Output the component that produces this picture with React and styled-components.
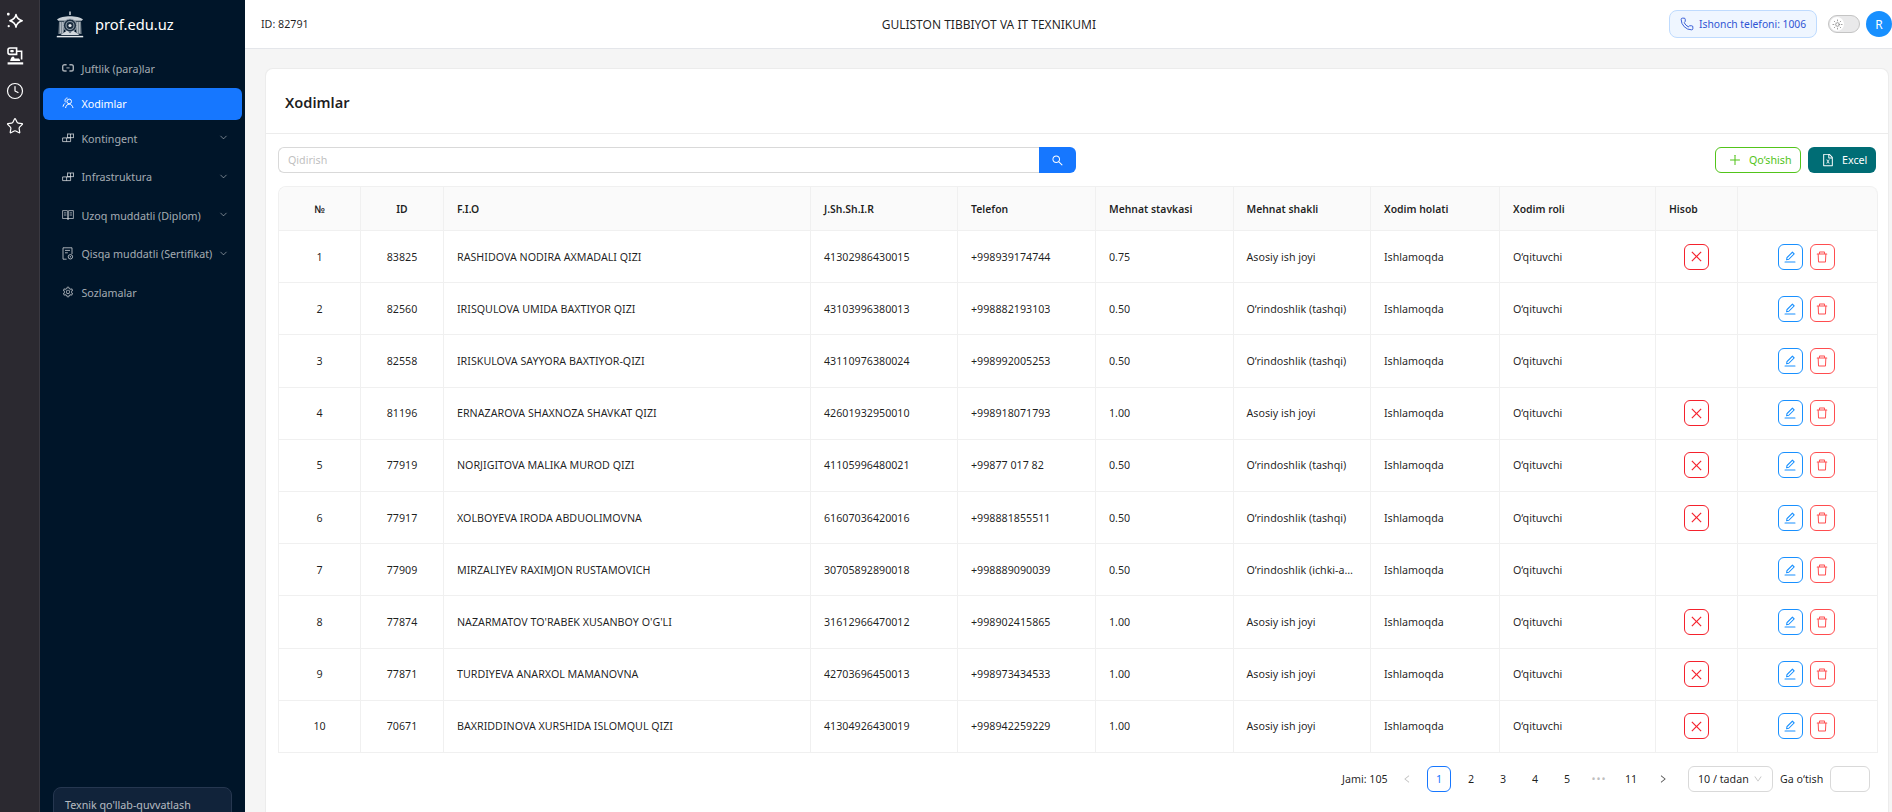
import React from 'react';
import styled, { createGlobalStyle } from 'styled-components';
import { Clock, Star, Phone, Sun, ChevronDown } from 'lucide-react';
import {
	AiOutlineClose,
	AiOutlineDelete,
	AiOutlineEdit,
	AiOutlineFileExcel,
	AiOutlineLeft,
	AiOutlinePlus,
	AiOutlineRight,
	AiOutlineSearch,
	AiOutlineSetting,
	AiOutlineDown
} from 'react-icons/ai';

const Global = createGlobalStyle`
	html, body {
		margin: 0;
		height: 100%;
		overflow: hidden;
		background: #f5f5f5;
	}
	body {
		font-family: 'Noto Sans', 'Open Sans', sans-serif;
		font-size: 10.7px;
		color: rgba(0, 0, 0, 0.88);
	}
	* {
		box-sizing: border-box;
	}
`;

const SparkIcon = () => (
	<svg width='18' height='18' viewBox='0 0 18 18' fill='none' stroke='currentColor' strokeWidth='1.5'>
		<path d='M10 2.5 C10.6 6 12.2 7.6 16.2 8.7 C12.2 9.8 10.6 11.4 10 15.2 C9.4 11.4 7.8 9.8 3.8 8.7 C7.8 7.6 9.4 6 10 2.5 Z' strokeLinejoin='round' />
		<rect x='1' y='0.8' width='2.6' height='2.6' rx='1' fill='currentColor' stroke='none' />
		<rect x='1.6' y='13' width='2.2' height='2.2' rx='1' fill='currentColor' stroke='none' />
	</svg>
);

const DeskIcon = () => (
	<svg width='17' height='18' viewBox='0 0 17 18' fill='none' stroke='currentColor' strokeWidth='1.6'>
		<path d='M3 1 H9.6 V7.4 H3 C1.8 7.4 1 6.6 1 5.6 V2.8 C1 1.8 1.8 1 3 1 Z' />
		<rect x='3.2' y='3' width='3.6' height='2.2' rx='1' fill='currentColor' stroke='none' />
		<path d='M9.6 4.2 H14.6 V12.4' />
		<path d='M5 9.8 C4 11.2 3.4 12.4 3.2 14 H13.2 C13 12.8 12.6 12 12 11.4 H7.6 L7 9.8 Z' fill='currentColor' stroke='none' />
		<path d='M0.6 16.4 H16.2' strokeWidth='2.2' />
	</svg>
);

const LinkIcon = () => (
	<svg width='12' height='12' viewBox='0 0 12 12' fill='none' stroke='currentColor' strokeWidth='1.4'>
		<path d='M4.6 2.8 H2.6 C1.4 2.8 0.7 3.6 0.7 4.6 V7.2 C0.7 8.2 1.4 9 2.6 9 H4.6' />
		<path d='M7.4 2.8 H9.4 C10.6 2.8 11.3 3.6 11.3 4.6 V7.2 C11.3 8.2 10.6 9 9.4 9 H7.4' />
		<path d='M4.4 5.9 H7.6' strokeWidth='1' />
	</svg>
);

const UsersIcon = () => (
	<svg width='12' height='12' viewBox='0 0 12 12' fill='none' stroke='currentColor' strokeWidth='1'>
		<circle cx='7.2' cy='4.4' r='2.3' />
		<path d='M3.6 11 C3.9 8.6 5.3 7.2 7.2 7.2 C9.1 7.2 10.5 8.6 11 11' />
		<path d='M5.5 1 C3.9 1 3 2.2 3 3.6 C3 4.3 3.3 4.8 3.6 5.3' />
		<path d='M2.9 6.4 C1.9 7.1 1.2 8.3 1 9.7' />
	</svg>
);

const BlocksIcon = () => (
	<svg width='12' height='12' viewBox='0 0 12 12' fill='none' stroke='currentColor' strokeWidth='1'>
		<rect x='5.5' y='2' width='6' height='3.6' />
		<path d='M0.6 5.9 H8.6 V9.6 H0.6 Z' />
		<path d='M4.6 5.9 V9.6' />
		<path d='M8.5 2 V5.6' />
	</svg>
);

const BookIcon = () => (
	<svg width='12' height='12' viewBox='0 0 12 12' fill='none' stroke='currentColor' strokeWidth='0.9'>
		<path d='M0.6 1.6 H5.1 C5.6 1.6 6 2 6 2.6 V10.4 C6 9.9 5.6 9.5 5.1 9.5 H0.6 Z' />
		<path d='M11.4 1.6 H6.9 C6.4 1.6 6 2 6 2.6 V10.4 C6 9.9 6.4 9.5 6.9 9.5 H11.4 Z' />
		<path d='M2 3.9 H4.4 M2 6 H4.4 M7.6 3.9 H10 M7.6 6 H10' />
	</svg>
);

const FileBadgeIcon = () => (
	<svg width='12' height='13' viewBox='0 0 12 13' fill='none' stroke='currentColor' strokeWidth='1'>
		<path d='M4.6 12.2 H1 V0.8 H10 V7' />
		<path d='M3 3.4 H8 M3 5.8 H5.8' />
		<circle cx='8.4' cy='9.8' r='2.2' />
		<circle cx='8.4' cy='9.8' r='0.7' fill='currentColor' stroke='none' />
	</svg>
);

const LogoIcon = () => (
	<svg width='28' height='27' viewBox='0 0 28 27' fill='none'>
		<path d='M14 0.5 V4' stroke='#dfe4e8' strokeWidth='1.4' />
		<path d='M1 8.4 C6 4.2 22 4.2 27 8.4 L25.6 9.8 H2.4 Z' fill='#c9d0d6' />
		<path d='M3 10.6 L9.4 10.6 L7.4 23 H2.4 Z M25 10.6 L18.6 10.6 L20.6 23 H25.6 Z' fill='#77848f' />
		<path d='M4.6 11 V22 M6.6 11 V22 M23.4 11 V22 M21.4 11 V22' stroke='#cfd6dc' strokeWidth='0.7' />
		<circle cx='14' cy='14.5' r='6.6' fill='#1a2c3f' stroke='#a5b0ba' strokeWidth='1' />
		<circle cx='14' cy='14.5' r='4' stroke='#8997a3' strokeWidth='1.1' />
		<circle cx='14' cy='14.5' r='1.6' fill='#e6eaed' />
		<path d='M4.5 24 L11 19.6 L14 22.2 L17 19.6 L23.5 24 Z' fill='#d3d9de' />
		<path d='M0.8 25.6 H27.2' stroke='#e6eaed' strokeWidth='1.5' />
	</svg>
);

const menuItems = [
	{ label: 'Juftlik (para)lar', icon: <LinkIcon /> },
	{ label: 'Xodimlar', icon: <UsersIcon />, active: true },
	{ label: 'Kontingent', icon: <BlocksIcon />, sub: true },
	{ label: 'Infrastruktura', icon: <BlocksIcon />, sub: true },
	{ label: 'Uzoq muddatli (Diplom)', icon: <BookIcon />, sub: true },
	{ label: 'Qisqa muddatli (Sertifikat)', icon: <FileBadgeIcon />, sub: true },
	{ label: 'Sozlamalar', icon: <AiOutlineSetting size={12} /> }
];

const columns = [
	{ title: '№', width: 82, center: true },
	{ title: 'ID', width: 83, center: true },
	{ title: 'F.I.O', width: 367 },
	{ title: 'J.Sh.Sh.I.R', width: 147 },
	{ title: 'Telefon', width: 138 },
	{ title: 'Mehnat stavkasi', width: 137.5 },
	{ title: 'Mehnat shakli', width: 137.5 },
	{ title: 'Xodim holati', width: 129 },
	{ title: 'Xodim roli', width: 156 },
	{ title: 'Hisob', width: 82 },
	{ title: '', width: 140 }
];

const MAIN = 'Asosiy ish joyi';
const TASHQI = 'O‘rindoshlik (tashqi)';

const employees = [
	[1, 83825, 'RASHIDOVA NODIRA AXMADALI QIZI', '41302986430015', '+998939174744', '0.75', MAIN, true],
	[2, 82560, 'IRISQULOVA UMIDA BAXTIYOR QIZI', '43103996380013', '+998882193103', '0.50', TASHQI, false],
	[3, 82558, 'IRISKULOVA SAYYORA BAXTIYOR-QIZI', '43110976380024', '+998992005253', '0.50', TASHQI, false],
	[4, 81196, 'ERNAZAROVA SHAXNOZA SHAVKAT QIZI', '42601932950010', '+998918071793', '1.00', MAIN, true],
	[5, 77919, 'NORJIGITOVA MALIKA MUROD QIZI', '41105996480021', '+99877 017 82', '0.50', TASHQI, true],
	[6, 77917, 'XOLBOYEVA IRODA ABDUOLIMOVNA', '61607036420016', '+998881855511', '0.50', TASHQI, true],
	[7, 77909, 'MIRZALIYEV RAXIMJON RUSTAMOVICH', '30705892890018', '+998889090039', '0.50', 'O‘rindoshlik (ichki-asosiy)', false],
	[8, 77874, "NAZARMATOV TO'RABEK XUSANBOY O'G'LI", '31612966470012', '+998902415865', '1.00', MAIN, true],
	[9, 77871, 'TURDIYEVA ANARXOL MAMANOVNA', '42703696450013', '+998973434533', '1.00', MAIN, true],
	[10, 70671, 'BAXRIDDINOVA XURSHIDA ISLOMQUL QIZI', '41304926430019', '+998942259229', '1.00', MAIN, true]
];

const pages = ['1', '2', '3', '4', '5', '•••', '11'];

export default function App() {
	return (
		<Page>
			<Global />
			<Rail>
				<RailIcon><SparkIcon /></RailIcon>
				<RailIcon><DeskIcon /></RailIcon>
				<RailIcon><Clock size={18} strokeWidth={1.6} /></RailIcon>
				<RailIcon><Star size={18} strokeWidth={1.6} /></RailIcon>
			</Rail>
			<Sidebar>
				<Brand>
					<LogoIcon />
					<BrandName>prof.edu.uz</BrandName>
				</Brand>
				<Menu>
					{menuItems.map((item) => (
						<MenuItem key={item.label} $active={item.active} $sub={item.sub}>
							<MenuIcon>{item.icon}</MenuIcon>
							<MenuLabel>{item.label}</MenuLabel>
							{item.sub && <MenuChevron size={11} strokeWidth={1.5} />}
						</MenuItem>
					))}
				</Menu>
				<Support>Texnik qo'llab-quvvatlash</Support>
			</Sidebar>
			<Main>
				<Header>
					<span>ID: 82791</span>
					<HeaderTitle>GULISTON TIBBIYOT VA IT TEXNIKUMI</HeaderTitle>
					<HeaderRight>
						<PhonePill>
							<Phone size={14} strokeWidth={1.6} />
							Ishonch telefoni: 1006
						</PhonePill>
						<Toggle>
							<ToggleKnob><Sun size={11} strokeWidth={1.5} /></ToggleKnob>
						</Toggle>
						<Avatar>R</Avatar>
					</HeaderRight>
				</Header>
				<Content>
					<Card>
						<CardHeader>Xodimlar</CardHeader>
						<CardBody>
							<Toolbar>
								<SearchGroup>
									<SearchInput placeholder='Qidirish' />
									<SearchButton><AiOutlineSearch size={13} /></SearchButton>
								</SearchGroup>
								<ToolbarActions>
									<AddButton><AiOutlinePlus size={14} />Qo‘shish</AddButton>
									<ExcelButton><AiOutlineFileExcel size={14} />Excel</ExcelButton>
								</ToolbarActions>
							</Toolbar>
							<Table>
								<colgroup>
									{columns.map((col, i) => (
										<col key={i} style={{ width: col.width }} />
									))}
								</colgroup>
								<thead>
									<tr>
										{columns.map((col, i) => (
											<Th key={i} $center={col.center}>{col.title}</Th>
										))}
									</tr>
								</thead>
								<tbody>
									{employees.map((row) => (
										<tr key={row[0]}>
											<Td $center>{row[0]}</Td>
											<Td $center>{row[1]}</Td>
											<Td>{row[2]}</Td>
											<Td>{row[3]}</Td>
											<Td>{row[4]}</Td>
											<Td>{row[5]}</Td>
											<Td>{row[6]}</Td>
											<Td>Ishlamoqda</Td>
											<Td>O‘qituvchi</Td>
											<Td $center>
												{row[7] && (
													<IconButton $color='#f5222d'><AiOutlineClose size={15} /></IconButton>
												)}
											</Td>
											<Td $center>
												<ActionGroup>
													<IconButton $color='#1890ff'><AiOutlineEdit size={14} /></IconButton>
													<IconButton $color='#ff4d4f'><AiOutlineDelete size={14} /></IconButton>
												</ActionGroup>
											</Td>
										</tr>
									))}
								</tbody>
							</Table>
							<Pagination>
								<Total>Jami: 105</Total>
								<PageArrow $disabled><AiOutlineLeft size={10} /></PageArrow>
								{pages.map((p) => (
									<PageButton key={p} $active={p === '1'} $dots={p === '•••'}>{p}</PageButton>
								))}
								<PageArrow><AiOutlineRight size={10} /></PageArrow>
								<SizeSelect>10 / tadan<AiOutlineDown size={10} color='#bfbfbf' /></SizeSelect>
								<JumpLabel>Ga o‘tish</JumpLabel>
								<JumpInput />
							</Pagination>
						</CardBody>
					</Card>
				</Content>
			</Main>
		</Page>
	);
}

const Page = styled.div`
	display: flex;
	height: 812px;
	overflow: hidden;
`;

const Rail = styled.aside`
	flex: 0 0 40px;
	display: flex;
	flex-direction: column;
	padding-top: 3px;
	background: #2b2930;
	border-right: 1px solid #3a3840;
	color: #fff;
`;

const RailIcon = styled.div`
	width: 30px;
	height: 35px;
	display: flex;
	align-items: center;
	justify-content: center;
`;

const Sidebar = styled.aside`
	flex: 0 0 205px;
	min-width: 0;
	display: flex;
	flex-direction: column;
	background: #001529;
`;

const Brand = styled.div`
	display: flex;
	align-items: center;
	gap: 11px;
	height: 53px;
	padding: 0 0 5px 16px;
`;

const BrandName = styled.span`
	font-size: 14.7px;
	color: #fff;
`;

const Menu = styled.nav`
	flex: 1;
	display: flex;
	flex-direction: column;
	padding: 0 3px;
`;

const MenuItem = styled.div`
	display: flex;
	align-items: center;
	height: 32px;
	flex: none;
	margin-bottom: ${(p) => (p.$sub ? '6.5px' : '3px')};
	padding: 0 13px 0 19px;
	border-radius: 6px;
	background: ${(p) => (p.$active ? '#1677ff' : 'transparent')};
	color: ${(p) => (p.$active ? '#fff' : 'rgba(255, 255, 255, 0.65)')};
`;

const MenuIcon = styled.span`
	display: flex;
	width: 19.5px;
	flex: none;
	margin-top: -2px;
`;

const MenuLabel = styled.span`
	flex: 1;
	padding-bottom: 1px;
	white-space: nowrap;
`;

const MenuChevron = styled(ChevronDown)`
	flex: none;
	margin-top: -3px;
`;

const Support = styled.div`
	margin: 0 13px -15px;
	height: 40px;
	padding: 10px 11px;
	background: #11233a;
	border: 1px solid #263750;
	border-radius: 8px;
	color: rgba(255, 255, 255, 0.7);
	white-space: nowrap;
`;

const Main = styled.main`
	flex: 1;
	min-width: 0;
	display: flex;
	flex-direction: column;
`;

const Header = styled.header`
	flex: 0 0 49px;
	display: flex;
	align-items: center;
	justify-content: space-between;
	padding-left: 16px;
	background: #fff;
	border-bottom: 1px solid #e4e6ea;
`;

const HeaderTitle = styled.span`
	font-size: 12px;
`;

const HeaderRight = styled.div`
	display: flex;
	align-items: center;
`;

const PhonePill = styled.div`
	display: flex;
	align-items: center;
	gap: 5px;
	width: 148px;
	height: 28px;
	padding: 0 0 0 10px;
	background: #eff6ff;
	border: 1px solid #bfdbfe;
	border-radius: 8px;
	color: #2f55d4;
	font-size: 10.3px;
	white-space: nowrap;
`;

const Toggle = styled.div`
	display: flex;
	align-items: center;
	width: 32px;
	height: 18px;
	margin: 0 6px 0 11px;
	padding: 1px;
	background: #e9e9ea;
	border: 1px solid #c4c4c4;
	border-radius: 9px;
`;

const ToggleKnob = styled.span`
	display: flex;
	align-items: center;
	justify-content: center;
	width: 14px;
	height: 14px;
	background: #fff;
	border-radius: 50%;
	color: #777;
`;

const Avatar = styled.div`
	display: flex;
	align-items: center;
	justify-content: center;
	width: 26px;
	height: 26px;
	background: #1890ff;
	border-radius: 50%;
	color: #fff;
	font-size: 12px;
`;

const Content = styled.div`
	flex: 1;
	min-height: 0;
	padding: 19px 3px 0 20px;
`;

const Card = styled.section`
	height: 100%;
	background: #fff;
	border: 1px solid #ececec;
	border-bottom: 0;
	border-radius: 8px 8px 0 0;
`;

const CardHeader = styled.div`
	display: flex;
	align-items: center;
	height: 65px;
	padding: 1px 0 0 19px;
	border-bottom: 1px solid #ececec;
	font-size: 14.6px;
	font-weight: 600;
`;

const CardBody = styled.div`
	padding: 13px 12px 0;
`;

const Toolbar = styled.div`
	display: flex;
	justify-content: space-between;
	height: 26px;
	margin-bottom: 13px;
`;

const SearchGroup = styled.div`
	display: flex;
	width: 798px;
`;

const SearchInput = styled.input`
	flex: 1;
	min-width: 0;
	padding: 0 9px;
	border: 1px solid #d9d9d9;
	border-right: 0;
	border-radius: 6px 0 0 6px;
	font: inherit;
	outline: none;
	&::placeholder {
		color: #bfbfbf;
	}
`;

const SearchButton = styled.button`
	flex: 0 0 37px;
	display: flex;
	align-items: center;
	justify-content: center;
	padding: 0;
	border: 0;
	border-radius: 0 6px 6px 0;
	background: #1677ff;
	color: #fff;
`;

const ToolbarActions = styled.div`
	display: flex;
	gap: 7px;
`;

const AddButton = styled.button`
	display: flex;
	align-items: center;
	gap: 7px;
	width: 86px;
	padding: 0 0 0 12px;
	background: #fff;
	border: 1px solid #52c41a;
	border-radius: 6px;
	color: #52c41a;
	font: inherit;
`;

const ExcelButton = styled.button`
	display: flex;
	align-items: center;
	gap: 7px;
	width: 68px;
	padding: 0 0 0 13px;
	background: #006d75;
	border: 0;
	border-radius: 6px;
	color: #fff;
	font: inherit;
`;

const Table = styled.table`
	width: 1598px;
	table-layout: fixed;
	border-collapse: separate;
	border-spacing: 0;
	border: 1px solid #f0f0f0;
	border-right: 0;
	border-bottom: 0;
	border-radius: 8px 8px 0 0;
`;

const Th = styled.th`
	height: 44px;
	padding: 0 13px;
	background: #fafafa;
	border-right: 1px solid #f0f0f0;
	border-bottom: 1px solid #f0f0f0;
	font-size: 10.4px;
	font-weight: 600;
	text-align: ${(p) => (p.$center ? 'center' : 'left')};
	&:first-child {
		border-top-left-radius: 8px;
	}
	&:last-child {
		border-top-right-radius: 8px;
	}
`;

const Td = styled.td`
	height: 52.2px;
	padding: 0 13px;
	border-right: 1px solid #f0f0f0;
	border-bottom: 1px solid #f0f0f0;
	white-space: nowrap;
	overflow: hidden;
	text-overflow: ellipsis;
	text-align: ${(p) => (p.$center ? 'center' : 'left')};
`;

const ActionGroup = styled.div`
	display: flex;
	justify-content: center;
	gap: 7px;
	padding-right: 3px;
`;

const IconButton = styled.button`
	display: inline-flex;
	align-items: center;
	justify-content: center;
	vertical-align: middle;
	width: 25px;
	height: 26px;
	padding: 0;
	background: #fff;
	border: 1px solid ${(p) => p.$color};
	border-radius: 6px;
	color: ${(p) => p.$color};
`;

const Pagination = styled.div`
	display: flex;
	align-items: center;
	height: 26px;
	margin-top: 13px;
	padding-left: 1064px;
`;

const Total = styled.span`
	width: 53px;
	flex: none;
	white-space: nowrap;
`;

const PageArrow = styled.span`
	display: flex;
	align-items: center;
	justify-content: center;
	width: 24px;
	height: 26px;
	margin-right: 8px;
	color: ${(p) => (p.$disabled ? '#bfbfbf' : 'rgba(0, 0, 0, 0.7)')};
`;

const PageButton = styled.span`
	display: flex;
	align-items: center;
	justify-content: center;
	width: 24px;
	height: 26px;
	margin-right: 8px;
	border: 1px solid ${(p) => (p.$active ? '#1677ff' : 'transparent')};
	border-radius: 6px;
	color: ${(p) => (p.$active ? '#1677ff' : p.$dots ? '#bfbfbf' : 'inherit')};
	letter-spacing: ${(p) => (p.$dots ? '1px' : '0')};
`;

const SizeSelect = styled.div`
	display: flex;
	align-items: center;
	justify-content: space-between;
	flex: none;
	width: 85px;
	height: 26px;
	margin-left: 5px;
	padding: 0 9px;
	border: 1px solid #d9d9d9;
	border-radius: 6px;
	white-space: nowrap;
`;

const JumpLabel = styled.span`
	flex: none;
	margin: 0 7px;
	white-space: nowrap;
`;

const JumpInput = styled.input`
	width: 40px;
	height: 26px;
	flex: none;
	border: 1px solid #d9d9d9;
	border-radius: 6px;
	outline: none;
`;
